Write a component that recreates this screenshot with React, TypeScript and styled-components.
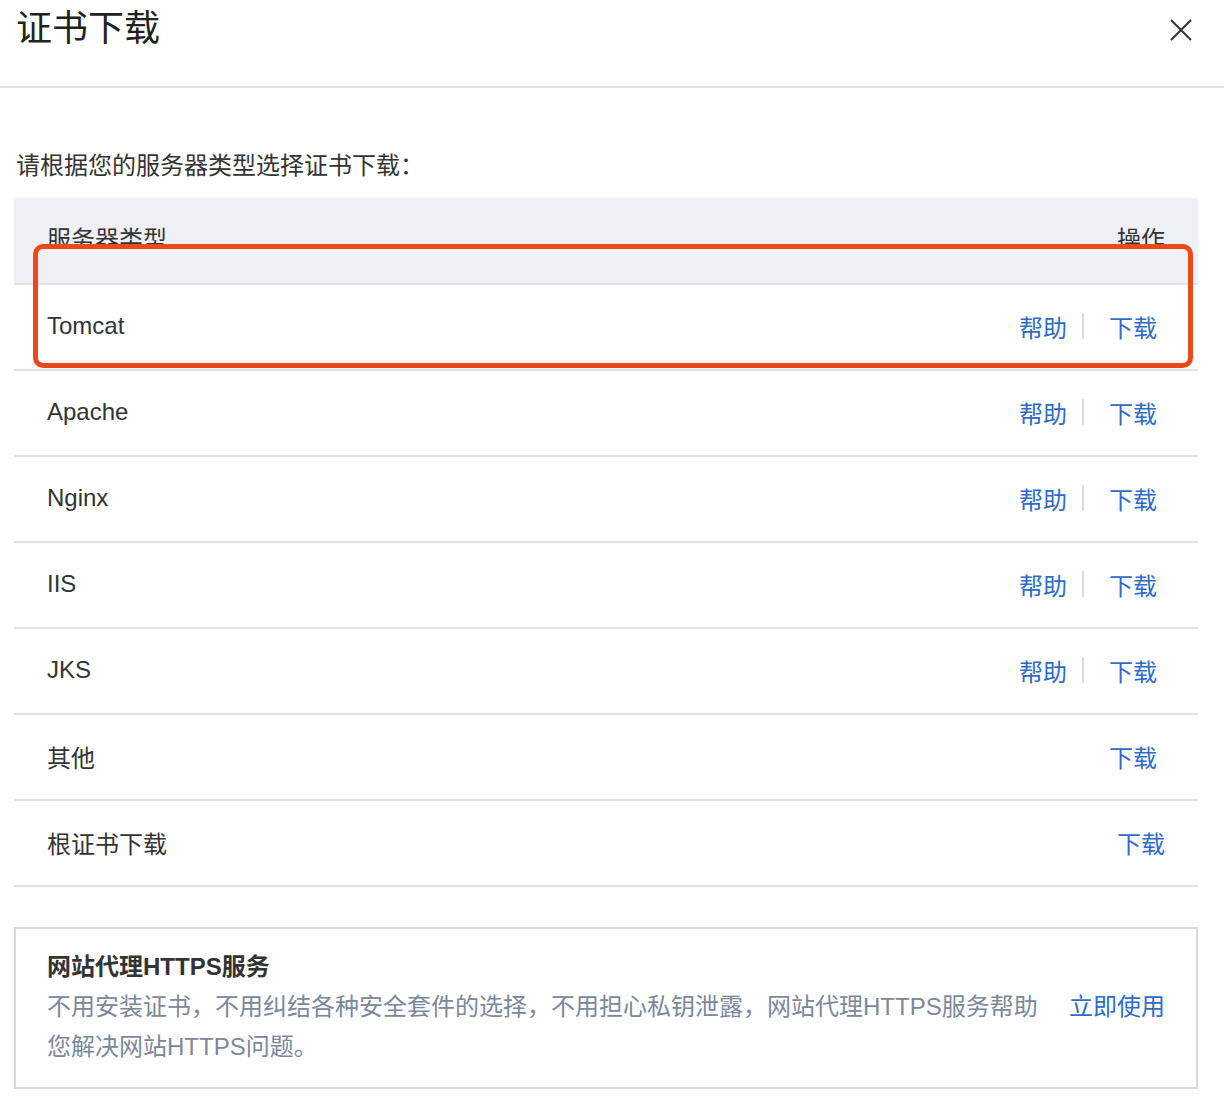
import React from 'react';
import styled, { createGlobalStyle } from 'styled-components';

const GlobalStyle = createGlobalStyle`
  body {
    margin: 0;
    background: #ffffff;
    font-family: "Liberation Sans", "Noto Sans CJK SC", sans-serif;
    color: #333333;
  }
`;

const Page = styled.div`
  width: 1224px;
  min-height: 1100px;
  background: #ffffff;
`;

const Header = styled.div`
  height: 88px;
  border-bottom: 2px solid #e3e3e3;
  display: flex;
  justify-content: space-between;
  align-items: flex-start;
  padding: 7px 32px 0 16px;
  box-sizing: border-box;
`;

const Title = styled.div`
  font-size: 36px;
  line-height: 44px;
  color: #222222;
`;

const CloseButton = styled.div`
  width: 22px;
  height: 22px;
  margin-top: 12px;
  cursor: pointer;
`;

const Content = styled.div`
  padding: 62px 26px 0 14px;
`;

const Intro = styled.div`
  font-size: 24px;
  line-height: 32px;
  color: #333333;
  padding-left: 2px;
  margin-bottom: 16px;
`;

const Table = styled.div`
  position: relative;
`;

const HeadRow = styled.div`
  height: 85px;
  background: #eef0f6;
  border-bottom: 2px solid #e2e3e8;
  display: flex;
  justify-content: space-between;
  padding: 0 33px;
`;

const HeadCell = styled.div`
  padding-top: 28px;
`;

const HeadClip = styled.div`
  height: 18px;
  overflow: hidden;
  font-size: 24px;
  line-height: 28px;
  color: #333333;
`;

const Row = styled.div`
  height: 84px;
  border-bottom: 2px solid #e2e2e2;
  display: flex;
  align-items: center;
  justify-content: space-between;
  padding: 0 33px 2px;
  box-sizing: border-box;
  height: 86px;
`;

const Name = styled.div`
  font-size: 24px;
  color: #333333;
`;

const Actions = styled.div<{ $inset: boolean }>`
  display: flex;
  align-items: center;
  padding-right: ${p => (p.$inset ? '8px' : '0')};
`;

const Link = styled.a`
  font-size: 24px;
  color: #2f6bc6;
  text-decoration: none;
  cursor: pointer;
`;

const Sep = styled.span`
  width: 2px;
  height: 26px;
  background: #dcdcdc;
  margin: 0 25px 0 15px;
`;

const Highlight = styled.div`
  position: absolute;
  left: 19px;
  top: 46px;
  width: 1160px;
  height: 124px;
  border: 5px solid #e9491b;
  border-radius: 10px;
  box-sizing: border-box;
  pointer-events: none;
`;

const Promo = styled.div`
  margin-top: 40px;
  border: 2px solid #d8d8d8;
  padding: 24px 31px 20px;
`;

const PromoTitle = styled.div`
  font-size: 24px;
  font-weight: bold;
  line-height: 28px;
  color: #333333;
  margin-bottom: 6px;
`;

const PromoBody = styled.div`
  display: flex;
  align-items: flex-start;
`;

const PromoText = styled.div`
  flex: 1;
  font-size: 24px;
  line-height: 40px;
  color: #7b879c;
`;

const PromoLink = styled(Link)`
  flex-shrink: 0;
  line-height: 40px;
  margin-left: 24px;
`;

const servers = [
  { name: 'Tomcat', help: true },
  { name: 'Apache', help: true },
  { name: 'Nginx', help: true },
  { name: 'IIS', help: true },
  { name: 'JKS', help: true },
  { name: '其他', help: false },
];

const App = () => {
  return (
    <Page>
      <GlobalStyle />
      <Header>
        <Title>证书下载</Title>
        <CloseButton>
          <svg width="22" height="22" viewBox="0 0 22 22">
            <path d="M1 1 L21 21 M21 1 L1 21" stroke="#333333" strokeWidth="2" fill="none" />
          </svg>
        </CloseButton>
      </Header>
      <Content>
        <Intro>请根据您的服务器类型选择证书下载：</Intro>
        <Table>
          <HeadRow>
            <HeadCell><HeadClip>服务器类型</HeadClip></HeadCell>
            <HeadCell><HeadClip>操作</HeadClip></HeadCell>
          </HeadRow>
          {servers.map(s => (
            <Row key={s.name}>
              <Name>{s.name}</Name>
              <Actions $inset>
                {s.help && <Link>帮助</Link>}
                {s.help && <Sep />}
                <Link>下载</Link>
              </Actions>
            </Row>
          ))}
          <Row>
            <Name>根证书下载</Name>
            <Actions $inset={false}>
              <Link>下载</Link>
            </Actions>
          </Row>
          <Highlight />
        </Table>
        <Promo>
          <PromoTitle>网站代理HTTPS服务</PromoTitle>
          <PromoBody>
            <PromoText>
              不用安装证书，不用纠结各种安全套件的选择，不用担心私钥泄露，网站代理HTTPS服务帮助您解决网站HTTPS问题。
            </PromoText>
            <PromoLink>立即使用</PromoLink>
          </PromoBody>
        </Promo>
      </Content>
    </Page>
  );
};

export default App;
